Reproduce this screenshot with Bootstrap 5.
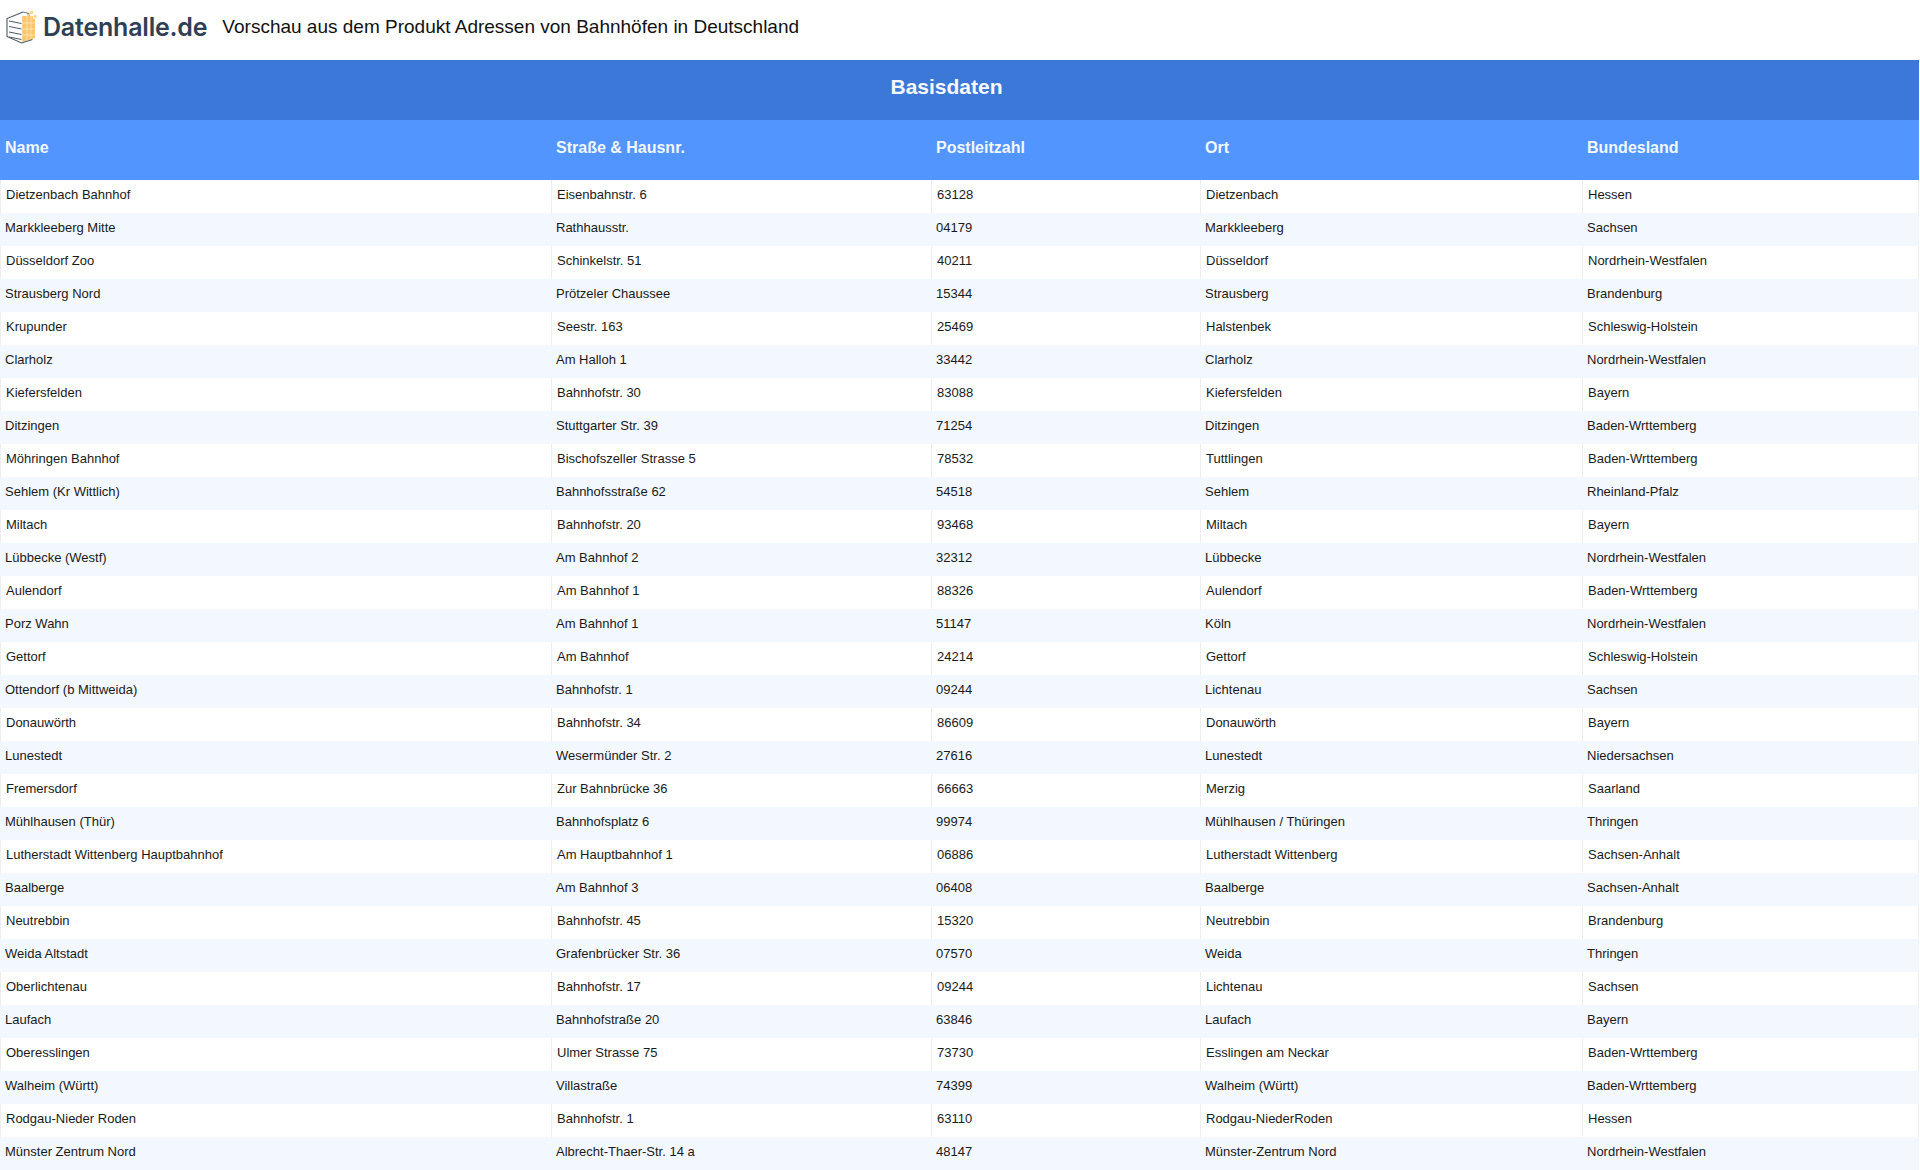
<!DOCTYPE html>
<html lang="de">
<head>
<meta charset="utf-8">
<title>Vorschau</title>
<link href="https://cdn.jsdelivr.net/npm/bootstrap@5.3.0/dist/css/bootstrap.min.css" rel="stylesheet">
<style>
html,body{margin:0;background:#fff;font-family:"Liberation Sans",Arial,sans-serif;overflow:hidden}
.dh-top{height:60px;padding-left:5px;padding-bottom:6px}
.dh-word{font-family:"Inter","Liberation Sans",sans-serif;font-weight:600;font-size:25px;letter-spacing:-.2px;color:#2f4054;line-height:1;margin-left:6px}
.dh-title{font-size:19px;color:#111;margin-left:15px;line-height:1;position:relative;top:-1px}
.dh-table{width:1919px;table-layout:fixed;border-collapse:separate;border-spacing:0;margin:0}
.dh-table th,.dh-table td{padding:0 0 0 5px;border:0;box-shadow:none;vertical-align:middle;background:transparent}
.dh-c1{width:551px}.dh-c2{width:380px}.dh-c3{width:269px}.dh-c4{width:382px}.dh-c5{width:337px}
.dh-table thead tr.dh-banner th{height:60px;background:#3c78d8;color:#f7f9fe;font-size:21px;font-weight:700;text-align:center;padding:0 26px 6px 0}
.dh-table thead tr.dh-head th{height:60px;background:#5295ff;color:#f3f7ff;font-size:16px;font-weight:700;text-align:left;padding-bottom:5px}
.dh-table tbody td{height:33px;font-size:13px;color:#1a1a1a;line-height:1;padding-bottom:4px}
.dh-table tbody tr:nth-child(odd) td{background:#fff;border-left:1px solid #eee}
.dh-table tbody tr:nth-child(odd) td:last-child{border-right:1px solid #eee}
.dh-table tbody tr:nth-child(even) td{background:#f3f7fe}
</style>
</head>
<body>
<div class="dh-top d-flex align-items-center">
<svg width="32" height="34" viewBox="0 0 32 34" aria-hidden="true">
<path d="M17 6h5V3h3v3h3v3h2v19l-13 4z" fill="#f9c668"/>
<rect x="25" y="1" width="3" height="3" fill="#fbd890"/><rect x="29" y="5" width="2.500" height="3" fill="#fbd890"/>
<path d="M17 6v26M22 6v25M26 6v24M17 13h13M17 19h13M17 25h13" stroke="#fde9c4" stroke-width=".8"/>
<path d="M18 2 2 8.500v18l14.500 6.500 11-3.500" fill="none" stroke="#4a5969" stroke-width="1.100"/>
<path d="M18 2l6 1.500" fill="none" stroke="#4a5969" stroke-width=".8"/>
<path d="M4 11l12.500 2.500M4 16.500l12.500 2.500M4 22l12.500 2.500M4 27l12.500 2.500" stroke="#4a5969" stroke-width="1"/>
</svg>
<span class="dh-word">Datenhalle.de</span>
<span class="dh-title">Vorschau aus dem Produkt Adressen von Bahnhöfen in Deutschland</span>
</div>
<table class="table dh-table">
<colgroup><col class="dh-c1"><col class="dh-c2"><col class="dh-c3"><col class="dh-c4"><col class="dh-c5"></colgroup>
<thead>
<tr class="dh-banner"><th colspan="5">Basisdaten</th></tr>
<tr class="dh-head"><th>Name</th><th>Straße &amp; Hausnr.</th><th>Postleitzahl</th><th>Ort</th><th>Bundesland</th></tr>
</thead>
<tbody>
<tr><td>Dietzenbach Bahnhof</td><td>Eisenbahnstr. 6</td><td>63128</td><td>Dietzenbach</td><td>Hessen</td></tr>
<tr><td>Markkleeberg Mitte</td><td>Rathhausstr.</td><td>04179</td><td>Markkleeberg</td><td>Sachsen</td></tr>
<tr><td>Düsseldorf Zoo</td><td>Schinkelstr. 51</td><td>40211</td><td>Düsseldorf</td><td>Nordrhein-Westfalen</td></tr>
<tr><td>Strausberg Nord</td><td>Prötzeler Chaussee</td><td>15344</td><td>Strausberg</td><td>Brandenburg</td></tr>
<tr><td>Krupunder</td><td>Seestr. 163</td><td>25469</td><td>Halstenbek</td><td>Schleswig-Holstein</td></tr>
<tr><td>Clarholz</td><td>Am Halloh 1</td><td>33442</td><td>Clarholz</td><td>Nordrhein-Westfalen</td></tr>
<tr><td>Kiefersfelden</td><td>Bahnhofstr. 30</td><td>83088</td><td>Kiefersfelden</td><td>Bayern</td></tr>
<tr><td>Ditzingen</td><td>Stuttgarter Str. 39</td><td>71254</td><td>Ditzingen</td><td>Baden-Wrttemberg</td></tr>
<tr><td>Möhringen Bahnhof</td><td>Bischofszeller Strasse 5</td><td>78532</td><td>Tuttlingen</td><td>Baden-Wrttemberg</td></tr>
<tr><td>Sehlem (Kr Wittlich)</td><td>Bahnhofsstraße 62</td><td>54518</td><td>Sehlem</td><td>Rheinland-Pfalz</td></tr>
<tr><td>Miltach</td><td>Bahnhofstr. 20</td><td>93468</td><td>Miltach</td><td>Bayern</td></tr>
<tr><td>Lübbecke (Westf)</td><td>Am Bahnhof 2</td><td>32312</td><td>Lübbecke</td><td>Nordrhein-Westfalen</td></tr>
<tr><td>Aulendorf</td><td>Am Bahnhof 1</td><td>88326</td><td>Aulendorf</td><td>Baden-Wrttemberg</td></tr>
<tr><td>Porz Wahn</td><td>Am Bahnhof 1</td><td>51147</td><td>Köln</td><td>Nordrhein-Westfalen</td></tr>
<tr><td>Gettorf</td><td>Am Bahnhof</td><td>24214</td><td>Gettorf</td><td>Schleswig-Holstein</td></tr>
<tr><td>Ottendorf (b Mittweida)</td><td>Bahnhofstr. 1</td><td>09244</td><td>Lichtenau</td><td>Sachsen</td></tr>
<tr><td>Donauwörth</td><td>Bahnhofstr. 34</td><td>86609</td><td>Donauwörth</td><td>Bayern</td></tr>
<tr><td>Lunestedt</td><td>Wesermünder Str. 2</td><td>27616</td><td>Lunestedt</td><td>Niedersachsen</td></tr>
<tr><td>Fremersdorf</td><td>Zur Bahnbrücke 36</td><td>66663</td><td>Merzig</td><td>Saarland</td></tr>
<tr><td>Mühlhausen (Thür)</td><td>Bahnhofsplatz 6</td><td>99974</td><td>Mühlhausen / Thüringen</td><td>Thringen</td></tr>
<tr><td>Lutherstadt Wittenberg Hauptbahnhof</td><td>Am Hauptbahnhof 1</td><td>06886</td><td>Lutherstadt Wittenberg</td><td>Sachsen-Anhalt</td></tr>
<tr><td>Baalberge</td><td>Am Bahnhof 3</td><td>06408</td><td>Baalberge</td><td>Sachsen-Anhalt</td></tr>
<tr><td>Neutrebbin</td><td>Bahnhofstr. 45</td><td>15320</td><td>Neutrebbin</td><td>Brandenburg</td></tr>
<tr><td>Weida Altstadt</td><td>Grafenbrücker Str. 36</td><td>07570</td><td>Weida</td><td>Thringen</td></tr>
<tr><td>Oberlichtenau</td><td>Bahnhofstr. 17</td><td>09244</td><td>Lichtenau</td><td>Sachsen</td></tr>
<tr><td>Laufach</td><td>Bahnhofstraße 20</td><td>63846</td><td>Laufach</td><td>Bayern</td></tr>
<tr><td>Oberesslingen</td><td>Ulmer Strasse 75</td><td>73730</td><td>Esslingen am Neckar</td><td>Baden-Wrttemberg</td></tr>
<tr><td>Walheim (Württ)</td><td>Villastraße</td><td>74399</td><td>Walheim (Württ)</td><td>Baden-Wrttemberg</td></tr>
<tr><td>Rodgau-Nieder Roden</td><td>Bahnhofstr. 1</td><td>63110</td><td>Rodgau-NiederRoden</td><td>Hessen</td></tr>
<tr><td>Münster Zentrum Nord</td><td>Albrecht-Thaer-Str. 14 a</td><td>48147</td><td>Münster-Zentrum Nord</td><td>Nordrhein-Westfalen</td></tr>
</tbody>
</table>
<script src="https://cdn.jsdelivr.net/npm/bootstrap@5.3.0/dist/js/bootstrap.bundle.min.js"></script>
</body>
</html>
